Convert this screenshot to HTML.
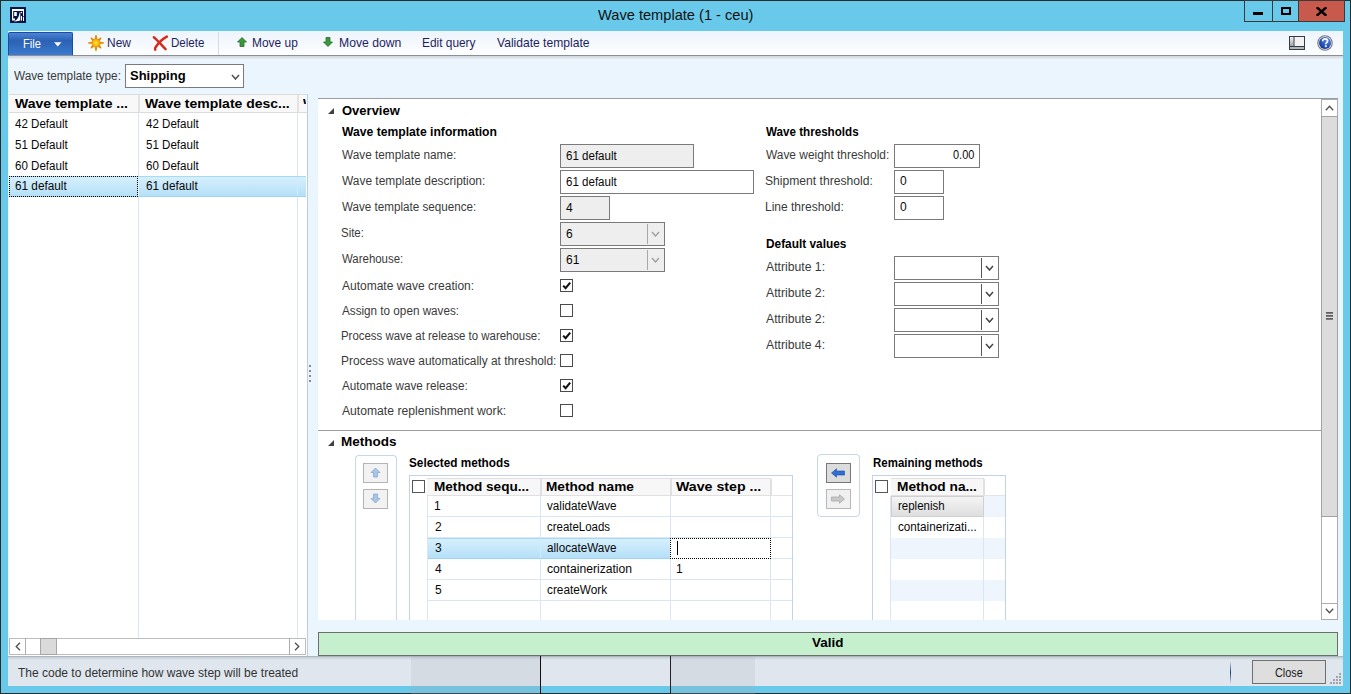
<!DOCTYPE html>
<html><head><meta charset="utf-8"><style>
html,body{margin:0;padding:0;background:#2b2b2b;overflow:hidden;}
#w{position:relative;width:1351px;height:694px;overflow:hidden;background:#2b2b2b;}
#w>div,#w>svg{position:absolute;box-sizing:border-box;}
.t{white-space:pre;line-height:normal;font-family:'Liberation Sans', sans-serif;transform-origin:0 0;}
</style></head><body><div id="w">
<div style="left:1px;top:1px;width:1349px;height:692px;background:#68c9ea"></div>
<div class="t" style="left:598.00px;top:6px;font-size:15px;font-weight:normal;color:#111;transform:scaleX(0.9748);">Wave template (1 - ceu)</div>
<svg style="left:10px;top:7px;" width="16" height="16" viewBox="0 0 16 16"><rect width="16" height="16" fill="#061546"/><path d="M2 2H14V9.2H13V4H3.2V11.6H5V13.4H2Z" fill="#fff"/><rect x="4.2" y="5" width="2.6" height="4" fill="#fff"/><path d="M3.2 14.6 C6.5 13.5 9 11 9.6 5.2 L10.3 6 L10.3 13.4 C8 14 5.5 14.5 3.2 14.6Z" fill="#fff"/><circle cx="11.4" cy="5.5" r="0.8" fill="#fff"/><rect x="11" y="9" width="1" height="4.6" fill="#fff"/><rect x="13" y="10" width="1" height="4" fill="#fff"/></svg>
<div style="left:1244px;top:0px;width:29px;height:22px;background:#68c9ea;border:1px solid #3a3a3a"></div>
<div style="left:1272px;top:0px;width:27px;height:22px;background:#68c9ea;border:1px solid #3a3a3a"></div>
<div style="left:1298px;top:0px;width:47px;height:22px;background:#c75a4d;border:1px solid #3a3a3a"></div>
<div style="left:1253px;top:12px;width:10px;height:3px;background:#000"></div>
<div style="left:1281px;top:7px;width:10px;height:8px;border:2px solid #000"></div>
<svg style="left:1316px;top:7px;" width="11" height="9" viewBox="0 0 11 9"><path d="M1.5 1 L9.5 8 M9.5 1 L1.5 8" stroke="#000" stroke-width="2.4" stroke-linecap="square"/></svg>
<div style="left:8px;top:31px;width:1335px;height:655px;background:#ebf5fd"></div>
<div style="left:8px;top:31px;width:1335px;height:24px;background:linear-gradient(#edf4fc,#fdfeff)"></div>
<div style="left:8px;top:55px;width:1335px;height:1px;background:#89909a"></div>
<div style="left:8px;top:56px;width:1335px;height:3px;background:linear-gradient(#d3d6da,#e6ecf2)"></div>
<div style="left:8px;top:32px;width:65px;height:23px;background:linear-gradient(#4a84d6 0%,#2c61b3 35%,#3a7bd0 100%);border:1px solid #1f4b9c;border-bottom:none;border-radius:2px 2px 0 0"></div>
<div class="t" style="left:23.15px;top:36px;font-size:13px;font-weight:normal;color:#fff;transform:scaleX(0.8500);">File</div>
<svg style="left:54px;top:42px;" width="8" height="5" viewBox="0 0 8 5"><path d="M0 0.3H7.5L3.75 4.6Z" fill="#fff"/></svg>
<svg style="left:88px;top:35px;" width="16" height="16" viewBox="0 0 16 16"><defs><radialGradient id="sg"><stop offset="0" stop-color="#ffe040"/><stop offset="1" stop-color="#f5a800"/></radialGradient></defs><polygon points="6.87,5.66 8.00,0.10 9.13,5.66" fill="#eb9a00" stroke="#e08c00" stroke-width="1.1" stroke-linejoin="round"/><polygon points="8.86,5.54 12.95,3.05 10.46,7.14" fill="#eb9a00" stroke="#e08c00" stroke-width="1.1" stroke-linejoin="round"/><polygon points="10.34,6.87 15.90,8.00 10.34,9.13" fill="#eb9a00" stroke="#e08c00" stroke-width="1.1" stroke-linejoin="round"/><polygon points="10.46,8.86 12.95,12.95 8.86,10.46" fill="#eb9a00" stroke="#e08c00" stroke-width="1.1" stroke-linejoin="round"/><polygon points="9.13,10.34 8.00,15.90 6.87,10.34" fill="#eb9a00" stroke="#e08c00" stroke-width="1.1" stroke-linejoin="round"/><polygon points="7.14,10.46 3.05,12.95 5.54,8.86" fill="#eb9a00" stroke="#e08c00" stroke-width="1.1" stroke-linejoin="round"/><polygon points="5.66,9.13 0.10,8.00 5.66,6.87" fill="#eb9a00" stroke="#e08c00" stroke-width="1.1" stroke-linejoin="round"/><polygon points="5.54,7.14 3.05,3.05 7.14,5.54" fill="#eb9a00" stroke="#e08c00" stroke-width="1.1" stroke-linejoin="round"/><circle cx="8" cy="8" r="3.8" fill="url(#sg)"/></svg>
<div class="t" style="left:107.08px;top:35px;font-size:13px;font-weight:normal;color:#1f1f5f;transform:scaleX(0.9200);">New</div>
<svg style="left:152px;top:35px;" width="16" height="16" viewBox="0 0 16 16"><path d="M1.8 2.2 C5 4.5 9 9.5 13.6 14.2" fill="none" stroke="#d42c1c" stroke-width="2.4" stroke-linecap="round"/><path d="M14.8 1.6 C10.5 4 6 8.5 3.6 12.2 C3 13.2 3 14 3.2 14.6" fill="none" stroke="#d42c1c" stroke-width="2.5" stroke-linecap="round"/></svg>
<div class="t" style="left:171.11px;top:35px;font-size:13px;font-weight:normal;color:#1f1f5f;transform:scaleX(0.8889);">Delete</div>
<div style="left:218px;top:32px;width:1px;height:23px;background:#d6dbe0"></div>
<svg style="left:237px;top:37px;" width="10" height="10" viewBox="0 0 10 10"><path d="M5 0.5L9.5 5H7V9.5H3V5H0.5Z" fill="#3a9a3a" stroke="#2a6a2a" stroke-width="0.8"/></svg>
<div class="t" style="left:252.08px;top:35px;font-size:13px;font-weight:normal;color:#1f1f5f;transform:scaleX(0.9184);">Move up</div>
<svg style="left:323px;top:37px;" width="10" height="10" viewBox="0 0 10 10"><path d="M5 9.5L9.5 5H7V0.5H3V5H0.5Z" fill="#3a9a3a" stroke="#2a6a2a" stroke-width="0.8"/></svg>
<div class="t" style="left:339.06px;top:35px;font-size:13px;font-weight:normal;color:#1f1f5f;transform:scaleX(0.9385);">Move down</div>
<div class="t" style="left:422.09px;top:35px;font-size:13px;font-weight:normal;color:#1f1f5f;transform:scaleX(0.9138);">Edit query</div>
<div class="t" style="left:497.00px;top:35px;font-size:13px;font-weight:normal;color:#1f1f5f;transform:scaleX(0.9293);">Validate template</div>
<svg style="left:1289px;top:36px;" width="16" height="14" viewBox="0 0 16 14"><defs><linearGradient id="pg" x1="0" y1="0" x2="0" y2="1"><stop offset="0" stop-color="#f4f4f4"/><stop offset="1" stop-color="#9ca2a8"/></linearGradient></defs><rect x="0.5" y="0.5" width="15" height="13" fill="#f2f2f2" stroke="#333b44"/><rect x="1" y="1" width="3.5" height="9" fill="url(#pg)"/><rect x="4.5" y="1" width="1" height="9" fill="#333b44"/><rect x="1" y="10" width="14" height="1" fill="#333b44"/><rect x="1" y="11" width="14" height="2" fill="#b0b5ba"/></svg>
<svg style="left:1317px;top:35px;" width="16" height="16" viewBox="0 0 16 16"><defs><radialGradient id="hg" cx="0.65" cy="0.3" r="0.8"><stop offset="0" stop-color="#5a8ae8"/><stop offset="1" stop-color="#0a2d9a"/></radialGradient></defs><circle cx="8" cy="8" r="7.8" fill="#7a7a7a"/><circle cx="8" cy="8" r="6.7" fill="#e8e8e8"/><circle cx="8" cy="8" r="6" fill="url(#hg)"/><path d="M5.6 6.2 C5.6 4.5 6.8 3.8 8.1 3.8 C9.6 3.8 10.6 4.7 10.6 5.9 C10.6 7.4 8.8 7.6 8.8 9.2" fill="none" stroke="#fff" stroke-width="1.7"/><rect x="7.9" y="10.3" width="1.8" height="1.8" fill="#fff"/></svg>
<div class="t" style="left:14.00px;top:69px;font-size:12px;font-weight:normal;color:#3a3a3a;transform:scaleX(0.9815);">Wave template type:</div>
<div style="left:125px;top:64px;width:119px;height:24px;background:#fff;border:1px solid #7a7a7a"></div>
<div class="t" style="left:130.00px;top:68px;font-size:13px;font-weight:bold;color:#000;">Shipping</div>
<svg style="left:231px;top:74px;" width="9" height="6" viewBox="0 0 9 6"><path d="M1 1L4.5 5L8 1" fill="none" stroke="#555" stroke-width="1.6"/></svg>
<div style="left:9px;top:94px;width:299px;height:562px;background:#fff"></div>
<div style="left:307px;top:94px;width:1px;height:562px;background:#b9cde6"></div>
<div style="left:9px;top:94px;width:298px;height:19px;background:#f8f8f8;border-top:1px solid #dcdcdc;border-bottom:1px solid #dcdcdc"></div>
<div style="left:138px;top:95px;width:2px;height:17px;background:#e2e2e2"></div>
<div style="left:297px;top:95px;width:2px;height:17px;background:#e2e2e2"></div>
<div class="t" style="left:15.00px;top:96px;font-size:13px;font-weight:bold;color:#000;transform:scaleX(1.0762);">Wave template ...</div>
<div class="t" style="left:145.00px;top:96px;font-size:13px;font-weight:bold;color:#000;transform:scaleX(1.0746);">Wave template desc...</div>
<div style="left:303px;top:95px;width:3px;height:9px;overflow:hidden"><div class="t" style="position:absolute;left:0;top:1px;font-size:13px;font-weight:bold;color:#000">W</div></div>
<div style="left:138px;top:113px;width:1px;height:525px;background:#dbe6f4"></div>
<div style="left:297px;top:113px;width:1px;height:525px;background:#dbe6f4"></div>
<div class="t" style="left:15.00px;top:117px;font-size:12px;font-weight:normal;color:#080808;transform:scaleX(0.9636);">42 Default</div>
<div class="t" style="left:146.00px;top:117px;font-size:12px;font-weight:normal;color:#080808;transform:scaleX(0.9636);">42 Default</div>
<div class="t" style="left:15.00px;top:138px;font-size:12px;font-weight:normal;color:#080808;transform:scaleX(0.9636);">51 Default</div>
<div class="t" style="left:146.00px;top:138px;font-size:12px;font-weight:normal;color:#080808;transform:scaleX(0.9636);">51 Default</div>
<div class="t" style="left:15.00px;top:159px;font-size:12px;font-weight:normal;color:#080808;transform:scaleX(0.9636);">60 Default</div>
<div class="t" style="left:146.00px;top:159px;font-size:12px;font-weight:normal;color:#080808;transform:scaleX(0.9636);">60 Default</div>
<div style="left:9px;top:176px;width:297px;height:21px;background:linear-gradient(#d6effc,#b5e0f8);border-top:1px solid #a6dbf7;border-bottom:1px solid #9ed5f4"></div>
<div style="left:9px;top:176px;width:129px;height:21px;border:1px dotted #000"></div>
<div style="left:138px;top:177px;width:1px;height:19px;background:#e4f1fb"></div>
<div style="left:297px;top:177px;width:1px;height:19px;background:#d2ebf9"></div>
<div class="t" style="left:15.00px;top:179px;font-size:12px;font-weight:normal;color:#080808;transform:scaleX(0.9811);">61 default</div>
<div class="t" style="left:146.00px;top:179px;font-size:12px;font-weight:normal;color:#080808;transform:scaleX(0.9811);">61 default</div>
<div style="left:9px;top:638px;width:297px;height:17px;background:#fff;border:1px solid #bcbcbc"></div>
<div style="left:25px;top:638px;width:1px;height:17px;background:#acacac"></div>
<div style="left:289px;top:638px;width:1px;height:17px;background:#acacac"></div>
<div style="left:40px;top:638px;width:17px;height:17px;background:#dadada;border:1px solid #a6a6a6"></div>
<svg style="left:15px;top:642px;" width="6" height="9" viewBox="0 0 6 9"><path d="M5 0.8L1.2 4.5L5 8.2" fill="none" stroke="#505050" stroke-width="1.3"/></svg>
<svg style="left:294px;top:642px;" width="6" height="9" viewBox="0 0 6 9"><path d="M1 0.8L4.8 4.5L1 8.2" fill="none" stroke="#505050" stroke-width="1.3"/></svg>
<div style="left:309px;top:365px;width:2px;height:2px;background:#8a8a8a"></div>
<div style="left:309px;top:370px;width:2px;height:2px;background:#8a8a8a"></div>
<div style="left:309px;top:375px;width:2px;height:2px;background:#8a8a8a"></div>
<div style="left:309px;top:380px;width:2px;height:2px;background:#8a8a8a"></div>
<div style="left:318px;top:98px;width:1020px;height:522px;background:#fff"></div>
<div style="left:318px;top:98px;width:1020px;height:1px;background:#9c9c9c"></div>
<div style="left:1321px;top:99px;width:17px;height:521px;background:#fff;border:1px solid #acacac"></div>
<div style="left:1321px;top:116px;width:17px;height:401px;background:#dcdcdc;border:1px solid #a2a2a2"></div>
<div style="left:1321px;top:603px;width:17px;height:1px;background:#acacac"></div>
<svg style="left:1325px;top:105px;" width="9" height="6" viewBox="0 0 9 6"><path d="M0.8 5.2L4.5 1.2L8.2 5.2" fill="none" stroke="#505050" stroke-width="1.3"/></svg>
<svg style="left:1325px;top:608px;" width="9" height="6" viewBox="0 0 9 6"><path d="M0.8 0.8L4.5 4.8L8.2 0.8" fill="none" stroke="#505050" stroke-width="1.3"/></svg>
<svg style="left:1326px;top:312px;" width="7" height="8" viewBox="0 0 7 8"><path d="M0 0.9H7M0 3.9H7M0 6.9H7" stroke="#5e5e5e" stroke-width="1.6"/></svg>
<svg style="left:328px;top:108px;" width="7" height="7" viewBox="0 0 7 7"><path d="M6 0V6H0Z" fill="#404040"/></svg>
<div class="t" style="left:342.00px;top:103px;font-size:13px;font-weight:bold;color:#000;">Overview</div>
<div class="t" style="left:342.00px;top:125px;font-size:12px;font-weight:bold;color:#000;transform:scaleX(1.0131);">Wave template information</div>
<div class="t" style="left:342.00px;top:148px;font-size:12px;font-weight:normal;color:#3a3a3a;transform:scaleX(0.9828);">Wave template name:</div>
<div class="t" style="left:342.00px;top:174px;font-size:12px;font-weight:normal;color:#3a3a3a;transform:scaleX(0.9931);">Wave template description:</div>
<div class="t" style="left:342.00px;top:200px;font-size:12px;font-weight:normal;color:#3a3a3a;transform:scaleX(0.9710);">Wave template sequence:</div>
<div class="t" style="left:341.05px;top:226px;font-size:12px;font-weight:normal;color:#3a3a3a;transform:scaleX(0.9545);">Site:</div>
<div class="t" style="left:342.00px;top:252px;font-size:12px;font-weight:normal;color:#3a3a3a;transform:scaleX(0.9531);">Warehouse:</div>
<div style="left:560px;top:144px;width:134px;height:24px;background:#eeeeee;border:1px solid #7a7a7a"></div>
<div class="t" style="left:566.00px;top:149px;font-size:12px;font-weight:normal;color:#080808;transform:scaleX(0.9623);">61 default</div>
<div style="left:560px;top:170px;width:194px;height:24px;background:#fff;border:1px solid #7a7a7a"></div>
<div class="t" style="left:566.00px;top:175px;font-size:12px;font-weight:normal;color:#080808;transform:scaleX(0.9623);">61 default</div>
<div style="left:560px;top:196px;width:50px;height:24px;background:#eeeeee;border:1px solid #7a7a7a"></div>
<div class="t" style="left:566.00px;top:201px;font-size:12px;font-weight:normal;color:#080808;">4</div>
<div style="left:560px;top:222px;width:105px;height:24px;background:#eeeeee;border:1px solid #7a7a7a"></div>
<div style="left:647px;top:224px;width:1px;height:20px;background:#a8a8a8"></div>
<svg style="left:651px;top:231px;" width="9" height="6" viewBox="0 0 9 6"><path d="M1 1L4.5 5L8 1" fill="none" stroke="#a0a0a0" stroke-width="1.4"/></svg>
<div class="t" style="left:566.00px;top:227px;font-size:12px;font-weight:normal;color:#080808;">6</div>
<div style="left:560px;top:248px;width:105px;height:24px;background:#eeeeee;border:1px solid #7a7a7a"></div>
<div style="left:647px;top:250px;width:1px;height:20px;background:#a8a8a8"></div>
<svg style="left:651px;top:257px;" width="9" height="6" viewBox="0 0 9 6"><path d="M1 1L4.5 5L8 1" fill="none" stroke="#a0a0a0" stroke-width="1.4"/></svg>
<div class="t" style="left:566.00px;top:253px;font-size:12px;font-weight:normal;color:#080808;">61</div>
<div class="t" style="left:342.00px;top:279px;font-size:12px;font-weight:normal;color:#3a3a3a;">Automate wave creation:</div>
<div style="left:560px;top:279px;width:13px;height:13px;background:#fff;border:1px solid #4a4a4a"></div>
<svg style="left:560px;top:279px;" width="13" height="13" viewBox="0 0 13 13"><path d="M3.2 6.6L5.6 9.2L10.2 3.6" fill="none" stroke="#111" stroke-width="2.1"/></svg>
<div class="t" style="left:342.00px;top:304px;font-size:12px;font-weight:normal;color:#3a3a3a;transform:scaleX(0.9748);">Assign to open waves:</div>
<div style="left:560px;top:304px;width:13px;height:13px;background:#fff;border:1px solid #4a4a4a"></div>
<div class="t" style="left:341.05px;top:329px;font-size:12px;font-weight:normal;color:#3a3a3a;transform:scaleX(0.9519);">Process wave at release to warehouse:</div>
<div style="left:560px;top:329px;width:13px;height:13px;background:#fff;border:1px solid #4a4a4a"></div>
<svg style="left:560px;top:329px;" width="13" height="13" viewBox="0 0 13 13"><path d="M3.2 6.6L5.6 9.2L10.2 3.6" fill="none" stroke="#111" stroke-width="2.1"/></svg>
<div class="t" style="left:341.01px;top:354px;font-size:12px;font-weight:normal;color:#3a3a3a;transform:scaleX(0.9907);">Process wave automatically at threshold:</div>
<div style="left:560px;top:354px;width:13px;height:13px;background:#fff;border:1px solid #4a4a4a"></div>
<div class="t" style="left:342.00px;top:379px;font-size:12px;font-weight:normal;color:#3a3a3a;transform:scaleX(0.9766);">Automate wave release:</div>
<div style="left:560px;top:379px;width:13px;height:13px;background:#fff;border:1px solid #4a4a4a"></div>
<svg style="left:560px;top:379px;" width="13" height="13" viewBox="0 0 13 13"><path d="M3.2 6.6L5.6 9.2L10.2 3.6" fill="none" stroke="#111" stroke-width="2.1"/></svg>
<div class="t" style="left:342.00px;top:404px;font-size:12px;font-weight:normal;color:#3a3a3a;transform:scaleX(1.0124);">Automate replenishment work:</div>
<div style="left:560px;top:404px;width:13px;height:13px;background:#fff;border:1px solid #4a4a4a"></div>
<div class="t" style="left:766.00px;top:125px;font-size:12px;font-weight:bold;color:#000;transform:scaleX(0.9688);">Wave thresholds</div>
<div class="t" style="left:766.00px;top:148px;font-size:12px;font-weight:normal;color:#3a3a3a;transform:scaleX(0.9919);">Wave weight threshold:</div>
<div class="t" style="left:764.99px;top:174px;font-size:12px;font-weight:normal;color:#3a3a3a;transform:scaleX(1.0095);">Shipment threshold:</div>
<div class="t" style="left:765.00px;top:200px;font-size:12px;font-weight:normal;color:#3a3a3a;">Line threshold:</div>
<div style="left:894px;top:144px;width:86px;height:24px;background:#fff;border:1px solid #7a7a7a"></div>
<div class="t" style="left:953.00px;top:148px;font-size:12px;font-weight:normal;color:#080808;transform:scaleX(0.9130);">0.00</div>
<div style="left:894px;top:170px;width:50px;height:24px;background:#fff;border:1px solid #7a7a7a"></div>
<div class="t" style="left:900.00px;top:174px;font-size:12px;font-weight:normal;color:#080808;">0</div>
<div style="left:894px;top:196px;width:50px;height:24px;background:#fff;border:1px solid #7a7a7a"></div>
<div class="t" style="left:900.00px;top:200px;font-size:12px;font-weight:normal;color:#080808;">0</div>
<div class="t" style="left:766.00px;top:237px;font-size:12px;font-weight:bold;color:#000;transform:scaleX(0.9877);">Default values</div>
<div class="t" style="left:766.00px;top:260px;font-size:12px;font-weight:normal;color:#3a3a3a;transform:scaleX(1.0175);">Attribute 1:</div>
<div style="left:894px;top:256px;width:105px;height:24px;background:#fff;border:1px solid #7a7a7a"></div>
<div style="left:981px;top:258px;width:1px;height:20px;background:#555"></div>
<svg style="left:985px;top:265px;" width="9" height="6" viewBox="0 0 9 6"><path d="M1 1L4.5 5L8 1" fill="none" stroke="#444" stroke-width="1.5"/></svg>
<div class="t" style="left:766.00px;top:286px;font-size:12px;font-weight:normal;color:#3a3a3a;transform:scaleX(1.0175);">Attribute 2:</div>
<div style="left:894px;top:282px;width:105px;height:24px;background:#fff;border:1px solid #7a7a7a"></div>
<div style="left:981px;top:284px;width:1px;height:20px;background:#555"></div>
<svg style="left:985px;top:291px;" width="9" height="6" viewBox="0 0 9 6"><path d="M1 1L4.5 5L8 1" fill="none" stroke="#444" stroke-width="1.5"/></svg>
<div class="t" style="left:766.00px;top:312px;font-size:12px;font-weight:normal;color:#3a3a3a;transform:scaleX(1.0175);">Attribute 2:</div>
<div style="left:894px;top:308px;width:105px;height:24px;background:#fff;border:1px solid #7a7a7a"></div>
<div style="left:981px;top:310px;width:1px;height:20px;background:#555"></div>
<svg style="left:985px;top:317px;" width="9" height="6" viewBox="0 0 9 6"><path d="M1 1L4.5 5L8 1" fill="none" stroke="#444" stroke-width="1.5"/></svg>
<div class="t" style="left:766.00px;top:338px;font-size:12px;font-weight:normal;color:#3a3a3a;transform:scaleX(1.0175);">Attribute 4:</div>
<div style="left:894px;top:334px;width:105px;height:24px;background:#fff;border:1px solid #7a7a7a"></div>
<div style="left:981px;top:336px;width:1px;height:20px;background:#555"></div>
<svg style="left:985px;top:343px;" width="9" height="6" viewBox="0 0 9 6"><path d="M1 1L4.5 5L8 1" fill="none" stroke="#444" stroke-width="1.5"/></svg>
<div style="left:318px;top:430px;width:1003px;height:1px;background:#9c9c9c"></div>
<svg style="left:328px;top:440px;" width="7" height="7" viewBox="0 0 7 7"><path d="M6 0V6H0Z" fill="#404040"/></svg>
<div class="t" style="left:340.96px;top:434px;font-size:13px;font-weight:bold;color:#000;transform:scaleX(1.0385);">Methods</div>
<div style="left:355px;top:455px;width:42px;height:165px;border:1px solid #c9d6e6;border-bottom:none;border-radius:4px 4px 0 0"></div>
<div style="left:363px;top:463px;width:25px;height:20px;background:#f2f2f2;border:1px solid #b4b4b4"></div>
<div style="left:363px;top:489px;width:25px;height:20px;background:#f2f2f2;border:1px solid #b4b4b4"></div>
<svg style="left:370px;top:467px;" width="11" height="11" viewBox="0 0 11 11"><path d="M5.5 1L10 5.5H7.5V10H3.5V5.5H1Z" fill="#a9c6ea" stroke="#7fa0cc" stroke-width="0.7"/></svg>
<svg style="left:370px;top:493px;" width="11" height="11" viewBox="0 0 11 11"><path d="M5.5 10L10 5.5H7.5V1H3.5V5.5H1Z" fill="#a9c6ea" stroke="#7fa0cc" stroke-width="0.7"/></svg>
<div class="t" style="left:409.00px;top:456px;font-size:12px;font-weight:bold;color:#000;transform:scaleX(0.9806);">Selected methods</div>
<div style="left:409px;top:475px;width:384px;height:145px;background:#fff;border:1px solid #c0d3ea;border-bottom:none"></div>
<div style="left:412px;top:480px;width:13px;height:13px;background:#fff;border:1px solid #555"></div>
<div style="left:427px;top:478px;width:344px;height:18px;background:#f7f7f7;border-top:1px solid #e0e0e0;border-bottom:1px solid #e0e0e0"></div>
<div style="left:771px;top:495px;width:21px;height:1px;background:#e4e4e4"></div>
<div style="left:540px;top:479px;width:2px;height:16px;background:#e0e0e0"></div>
<div style="left:670px;top:479px;width:2px;height:16px;background:#e0e0e0"></div>
<div style="left:770px;top:479px;width:2px;height:16px;background:#e0e0e0"></div>
<div class="t" style="left:433.96px;top:479px;font-size:13px;font-weight:bold;color:#000;transform:scaleX(1.0444);">Method sequ...</div>
<div class="t" style="left:545.95px;top:479px;font-size:13px;font-weight:bold;color:#000;transform:scaleX(1.0482);">Method name</div>
<div class="t" style="left:676.00px;top:479px;font-size:13px;font-weight:bold;color:#000;transform:scaleX(1.0897);">Wave step ...</div>
<div style="left:427px;top:496px;width:1px;height:124px;background:#dbe6f4"></div>
<div style="left:540px;top:496px;width:1px;height:124px;background:#dbe6f4"></div>
<div style="left:670px;top:496px;width:1px;height:124px;background:#dbe6f4"></div>
<div style="left:770px;top:496px;width:1px;height:124px;background:#dbe6f4"></div>
<div style="left:428px;top:516px;width:364px;height:1px;background:#dbe6f4"></div>
<div style="left:428px;top:537px;width:364px;height:1px;background:#dbe6f4"></div>
<div style="left:428px;top:558px;width:364px;height:1px;background:#dbe6f4"></div>
<div style="left:428px;top:579px;width:364px;height:1px;background:#dbe6f4"></div>
<div style="left:428px;top:600px;width:364px;height:1px;background:#dbe6f4"></div>
<div style="left:428px;top:538px;width:242px;height:21px;background:linear-gradient(#d6effc,#b5e0f8);border-top:1px solid #a6dbf7;border-bottom:1px solid #9ed5f4"></div>
<div style="left:540px;top:539px;width:1px;height:19px;background:#d2ebf9"></div>
<div style="left:670px;top:538px;width:101px;height:21px;background:#fff;border:1px dotted #000"></div>
<div style="left:677px;top:541px;width:1px;height:14px;background:#000"></div>
<div class="t" style="left:434.00px;top:499px;font-size:12px;font-weight:normal;color:#080808;">1</div>
<div class="t" style="left:547.00px;top:499px;font-size:12px;font-weight:normal;color:#080808;transform:scaleX(0.9722);">validateWave</div>
<div class="t" style="left:435.00px;top:520px;font-size:12px;font-weight:normal;color:#080808;">2</div>
<div class="t" style="left:547.00px;top:520px;font-size:12px;font-weight:normal;color:#080808;transform:scaleX(0.9545);">createLoads</div>
<div class="t" style="left:435.00px;top:541px;font-size:12px;font-weight:normal;color:#080808;">3</div>
<div class="t" style="left:547.00px;top:541px;font-size:12px;font-weight:normal;color:#080808;transform:scaleX(0.9722);">allocateWave</div>
<div class="t" style="left:435.00px;top:562px;font-size:12px;font-weight:normal;color:#080808;">4</div>
<div class="t" style="left:547.00px;top:562px;font-size:12px;font-weight:normal;color:#080808;transform:scaleX(1.0119);">containerization</div>
<div class="t" style="left:676.00px;top:562px;font-size:12px;font-weight:normal;color:#080808;">1</div>
<div class="t" style="left:435.00px;top:583px;font-size:12px;font-weight:normal;color:#080808;">5</div>
<div class="t" style="left:547.00px;top:583px;font-size:12px;font-weight:normal;color:#080808;transform:scaleX(0.9836);">createWork</div>
<div style="left:817px;top:454px;width:43px;height:63px;border:1px solid #c9d6e6;border-radius:4px"></div>
<div style="left:826px;top:463px;width:25px;height:20px;background:#dcdcdc;border:1px solid #787878"></div>
<div style="left:826px;top:489px;width:25px;height:20px;background:#f0f0f0;border:1px solid #b8b8b8"></div>
<svg style="left:831px;top:468px;" width="14" height="10" viewBox="0 0 14 10"><path d="M0.5 5L5.5 0.8V3H13.5V7H5.5V9.2Z" fill="#2f6ed6" stroke="#1a4aa0" stroke-width="0.6"/></svg>
<svg style="left:831px;top:494px;" width="14" height="10" viewBox="0 0 14 10"><path d="M13.5 5L8.5 0.8V3H0.5V7H8.5V9.2Z" fill="#c8c8c8" stroke="#9a9a9a" stroke-width="0.6"/></svg>
<div class="t" style="left:873.00px;top:456px;font-size:12px;font-weight:bold;color:#000;transform:scaleX(0.9565);">Remaining methods</div>
<div style="left:872px;top:475px;width:134px;height:145px;background:#fff;border:1px solid #c0d3ea;border-bottom:none"></div>
<div style="left:891px;top:496px;width:114px;height:21px;background:#eef5fc"></div>
<div style="left:891px;top:538px;width:114px;height:21px;background:#eef5fc"></div>
<div style="left:891px;top:580px;width:114px;height:21px;background:#eef5fc"></div>
<div style="left:875px;top:480px;width:13px;height:13px;background:#fff;border:1px solid #555"></div>
<div style="left:891px;top:478px;width:93px;height:18px;background:#f7f7f7;border-top:1px solid #e0e0e0;border-bottom:1px solid #e0e0e0"></div>
<div style="left:983px;top:479px;width:2px;height:16px;background:#e0e0e0"></div>
<div style="left:984px;top:495px;width:21px;height:1px;background:#e4e4e4"></div>
<div style="left:890px;top:496px;width:1px;height:124px;background:#dbe6f4"></div>
<div style="left:983px;top:496px;width:1px;height:124px;background:#dbe6f4"></div>
<div class="t" style="left:896.95px;top:479px;font-size:13px;font-weight:bold;color:#000;transform:scaleX(1.0541);">Method na...</div>
<div style="left:891px;top:496px;width:93px;height:21px;background:linear-gradient(#f4f4f4,#dedede);border:1px solid #d0d0d0"></div>
<div class="t" style="left:898.00px;top:499px;font-size:12px;font-weight:normal;color:#080808;transform:scaleX(0.9583);">replenish</div>
<div class="t" style="left:898.00px;top:520px;font-size:12px;font-weight:normal;color:#080808;transform:scaleX(0.9750);">containerizati...</div>
<div style="left:318px;top:632px;width:1020px;height:24px;background:#c6efce;border:1px solid #6e6e6e"></div>
<div class="t" style="left:812.00px;top:635px;font-size:13px;font-weight:bold;color:#000;transform:scaleX(1.0333);">Valid</div>
<div style="left:8px;top:656px;width:1335px;height:30px;background:linear-gradient(#97a0aa 0px,#c4ccd5 1px,#dfe6ee 4px,#dfe6ee 100%)"></div>
<div class="t" style="left:18.00px;top:666px;font-size:12px;font-weight:normal;color:#333;">The code to determine how wave step will be treated</div>
<div style="left:1230px;top:661px;width:1px;height:23px;background:linear-gradient(#dfe6ee,#10407f 50%,#dfe6ee)"></div>
<div style="left:1252px;top:660px;width:74px;height:24px;background:#dedede;border:1px solid #707070"></div>
<div class="t" style="left:1275.00px;top:666px;font-size:12px;font-weight:normal;color:#1a1a1a;transform:scaleX(0.9032);">Close</div>
<div style="left:1339px;top:673px;width:2px;height:2px;background:#a0a4a8"></div>
<div style="left:1336px;top:676px;width:2px;height:2px;background:#a0a4a8"></div>
<div style="left:1339px;top:676px;width:2px;height:2px;background:#a0a4a8"></div>
<div style="left:1333px;top:679px;width:2px;height:2px;background:#a0a4a8"></div>
<div style="left:1336px;top:679px;width:2px;height:2px;background:#a0a4a8"></div>
<div style="left:1339px;top:679px;width:2px;height:2px;background:#a0a4a8"></div>
<div style="left:1330px;top:682px;width:2px;height:2px;background:#a0a4a8"></div>
<div style="left:1333px;top:682px;width:2px;height:2px;background:#a0a4a8"></div>
<div style="left:1336px;top:682px;width:2px;height:2px;background:#a0a4a8"></div>
<div style="left:1339px;top:682px;width:2px;height:2px;background:#a0a4a8"></div>
<div style="left:411px;top:656px;width:129px;height:38px;background:rgba(175,175,185,0.2)"></div>
<div style="left:671px;top:656px;width:84px;height:38px;background:rgba(175,175,185,0.2)"></div>
<div style="left:540px;top:656px;width:1px;height:38px;background:#111"></div>
<div style="left:670px;top:656px;width:1px;height:38px;background:#222"></div>
</div></body></html>
